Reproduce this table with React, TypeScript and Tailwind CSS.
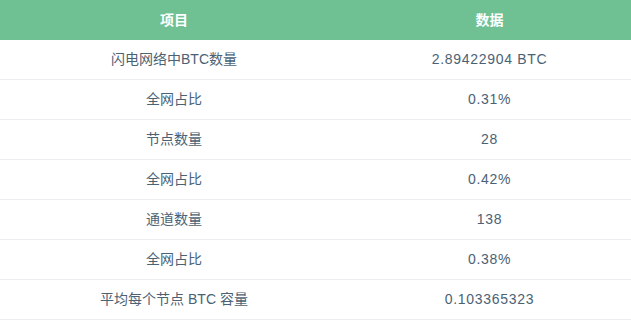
import React from "react";

const rows: [string, string][] = [
  ["闪电网络中BTC数量", "2.89422904 BTC"],
  ["全网占比", "0.31%"],
  ["节点数量", "28"],
  ["全网占比", "0.42%"],
  ["通道数量", "138"],
  ["全网占比", "0.38%"],
  ["平均每个节点 BTC 容量", "0.103365323"],
];

export default function App() {
  return (
    <div
      className="w-[631px] h-[325px] bg-white text-[14px]"
      style={{ fontFamily: '"Liberation Sans", "Noto Sans CJK SC", sans-serif' }}
    >
      <div className="flex h-[40px] bg-[#6fc194] text-white font-bold">
        <div className="w-[348px] flex items-center justify-center">项目</div>
        <div className="flex-1 flex items-center justify-center">数据</div>
      </div>
      {rows.map(([a, b], i) => (
        <div key={i} className="flex h-[40px] border-b border-[#ebedf0] text-[#4b6275]">
          <div className="w-[348px] flex items-center justify-center">{a}</div>
          <div className="flex-1 flex items-center justify-center tracking-[0.7px]">{b}</div>
        </div>
      ))}
    </div>
  );
}
